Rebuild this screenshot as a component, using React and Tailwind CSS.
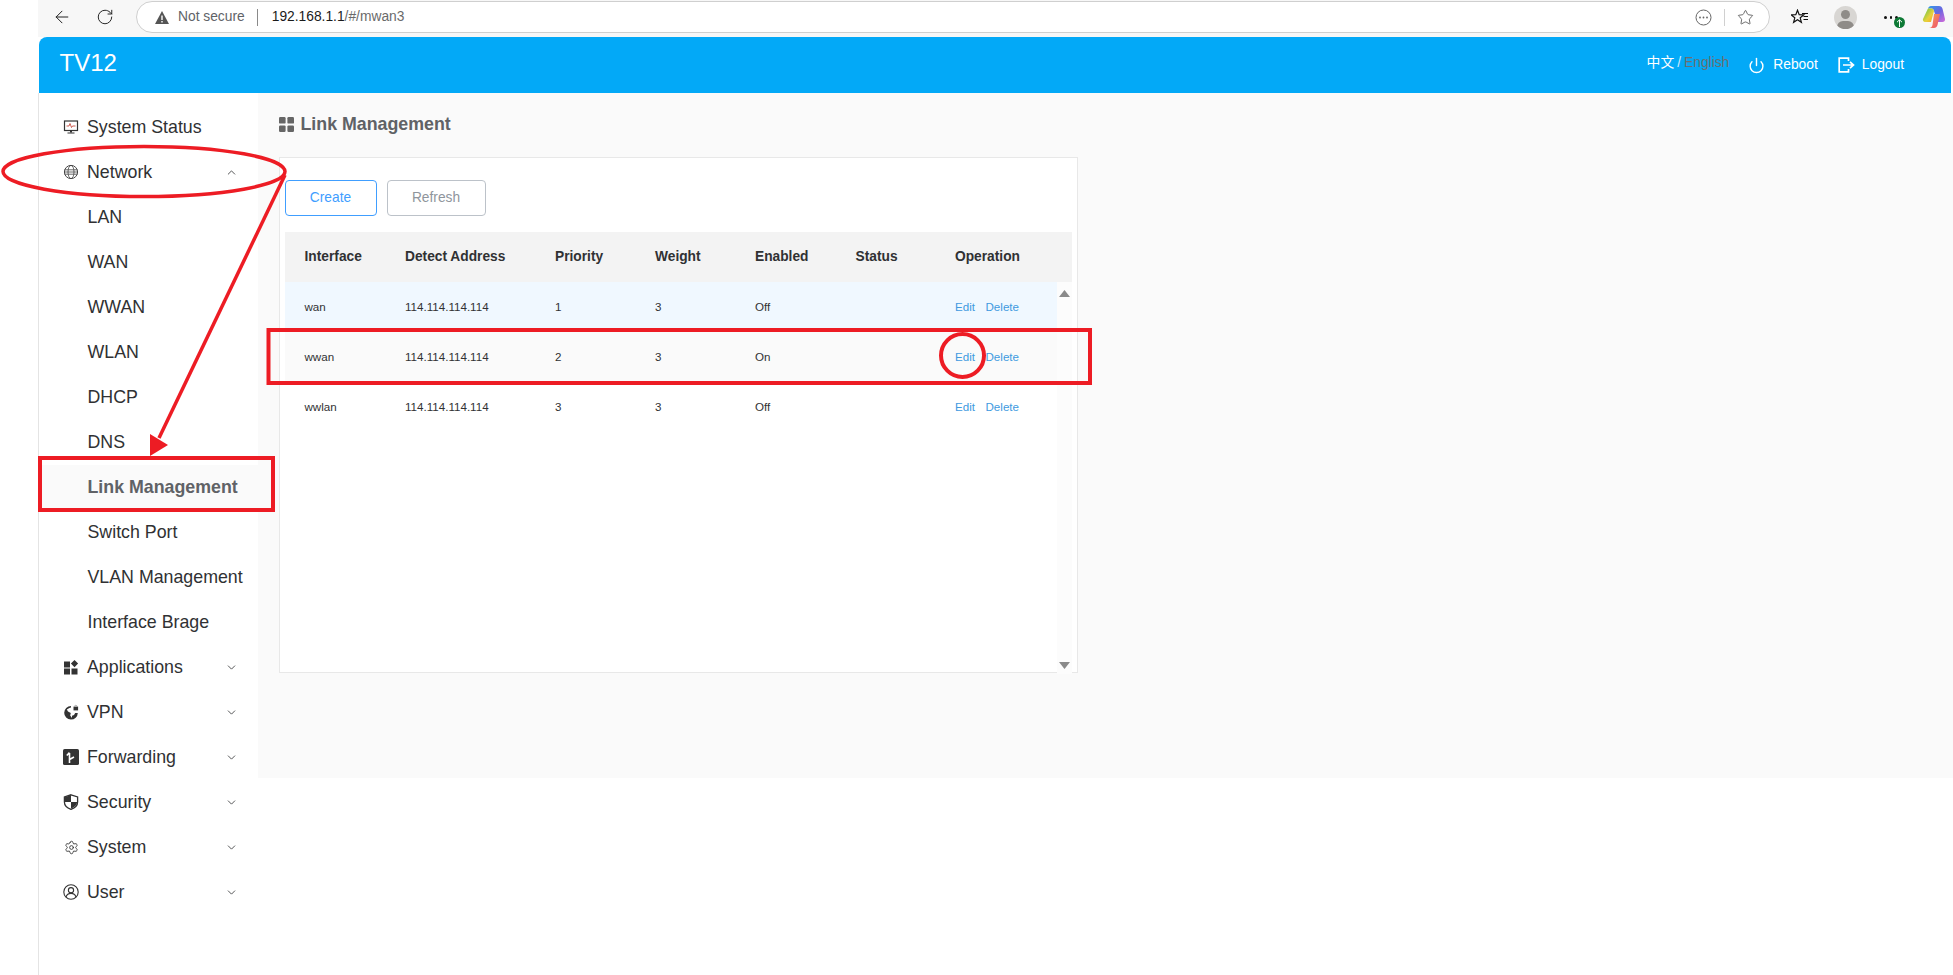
import React from "react";
import { ChevronUp, ChevronDown, ArrowLeft, RotateCw, Star, Power, Settings } from "lucide-react";

const P = ({ children, className = "" }) => (
  <svg viewBox="0 0 16 16" className={`w-[16px] h-[16px] shrink-0 ${className}`}>{children}</svg>
);

const icons = {
  status: (
    <P>
      <rect x="1.5" y="2" width="13" height="9.5" fill="none" stroke="#333" strokeWidth="1.2" />
      <path d="M3.5 7h2.5l1-2.5 1.5 4 1-1.5h3" fill="none" stroke="#c0392b" strokeWidth=".8" />
      <path d="M7 11.5h2v1.8H7zM4.5 13.5h7v1h-7z" fill="#333" />
    </P>
  ),
  network: (
    <P>
      <circle cx="8" cy="8" r="6.6" fill="none" stroke="#444" strokeWidth="1" />
      <ellipse cx="8" cy="8" rx="3" ry="6.6" fill="none" stroke="#444" strokeWidth=".8" />
      <path d="M1.6 5.8h12.8M1.4 8h13.2M1.6 10.2h12.8" stroke="#444" strokeWidth=".8" />
    </P>
  ),
  apps: (
    <P>
      <path d="M1 2.5h6v6H1zM1 9.5h6v6H1zM8.5 9.5h6v6h-6zM11.5 1l3.6 3.6-3.6 3.6-3.6-3.6z" fill="#333" />
    </P>
  ),
  vpn: (
    <P>
      <path d="M8 2a6.8 6.8 0 1 0 6.8 7h-2.6l-1.2 2-2 .8V14l-1.8-2.6.6-2.4-2.8-1.4-1.2-2L6.4 4l1.6-.4z" fill="#333" />
      <path d="M10.5 2.6h4.6v3.8h-4.6z" fill="#333" />
      <path d="M11.5 2.6a1.3 1.3 0 0 1 2.6 0" fill="none" stroke="#999" strokeWidth=".8" />
    </P>
  ),
  forward: (
    <P>
      <rect x="0" y="0" width="16" height="16" rx="1.6" fill="#333" />
      <path d="M6.5 14V4M3.8 6.5 6.5 3.6M6.5 10.5l4.5-2.5" fill="none" stroke="#fff" strokeWidth="1.6" />
    </P>
  ),
  security: (
    <P>
      <path d="M8 .8 14.6 3v5c0 3.6-2.8 6-6.6 7.4C4.200 14 1.400 11.600 1.400 8V3z" fill="none" stroke="#333" strokeWidth="1.300" />
      <path d="M8 1v7H1.800V3.200zM8 8h6.200c-.3 3.300-2.800 5.300-6.200 6.600z" fill="#333" />
    </P>
  ),
  system: <Settings size={15} strokeWidth={1.4} color="#333" className="shrink-0" />,
  user: (
    <P>
      <circle cx="8" cy="8" r="7.200" fill="none" stroke="#333" strokeWidth="1.100" />
      <circle cx="8" cy="6.200" r="2.600" fill="none" stroke="#333" strokeWidth="1.100" />
      <path d="M3 13c.8-2.500 2.800-3.600 5-3.600s4.200 1.100 5 3.600" fill="none" stroke="#333" strokeWidth="1.100" />
    </P>
  ),
};

function TopItem({ icon, label, open, chevron = true }) {
  return (
    <div className="h-[45px] flex items-center pl-[25px] pr-[20px] text-[#303133]">
      <span className="w-[14px] h-[16px] flex items-center justify-center">{icons[icon]}</span>
      <span className="ml-[9px] text-[17.8px] flex-1 whitespace-nowrap">{label}</span>
      {chevron && (open ? <ChevronUp size={13} strokeWidth={1.5} /> : <ChevronDown size={13} strokeWidth={1.5} />)}
    </div>
  );
}

function SubItem({ label, active }) {
  return (
    <div
      className={
        active
          ? "h-[45px] flex items-center pl-[46.500px] bg-[#fafafa] border-l-2 border-[#409eff] text-[#606266] font-bold text-[17.800px] whitespace-nowrap"
          : "h-[45px] flex items-center pl-[48.500px] text-[#303133] text-[17.800px] whitespace-nowrap"
      }
    >
      {label}
    </div>
  );
}

function Sidebar() {
  return (
    <aside className="w-[220px] shrink-0 bg-white pt-[11.500px] border-l border-[#e4e4e4]">
      <TopItem icon="status" label="System Status" chevron={false} />
      <TopItem icon="network" label="Network" open />
      {["LAN", "WAN", "WWAN", "WLAN", "DHCP", "DNS"].map((s) => (
        <SubItem key={s} label={s} />
      ))}
      <SubItem label="Link Management" active />
      {["Switch Port", "VLAN Management", "Interface Brage"].map((s) => (
        <SubItem key={s} label={s} />
      ))}
      <TopItem icon="apps" label="Applications" />
      <TopItem icon="vpn" label="VPN" />
      <TopItem icon="forward" label="Forwarding" />
      <TopItem icon="security" label="Security" />
      <TopItem icon="system" label="System" />
      <TopItem icon="user" label="User" />
    </aside>
  );
}

const rows = [
  { name: "wan", pr: "1", en: "Off", bg: "bg-[#f0f8ff]" },
  { name: "wwan", pr: "2", en: "On", bg: "bg-[#fafafa]" },
  { name: "wwlan", pr: "3", en: "Off", bg: "bg-white" },
];
const cols = "grid grid-cols-[100.500px_150px_100px_100px_100.500px_99.500px_1fr] items-center";

function Table() {
  return (
    <div className="mx-[5px] mt-[16px]">
      <div className={`${cols} h-[50px] bg-[#f3f3f3] text-[13.750px] font-bold text-[#303133]`}>
        {["Interface", "Detect Address", "Priority", "Weight", "Enabled", "Status", "Operation"].map((h) => (
          <div key={h} className="pl-[20px] whitespace-nowrap">{h}</div>
        ))}
      </div>
      <div className="flex">
        <div className="w-[772.500px] text-[11.600px] text-[#303133]">
          {rows.map((r) => (
            <div key={r.name} className={`${cols} h-[50px] ${r.bg}`}>
              <div className="pl-[20px]">{r.name}</div>
              <div className="pl-[20px]">114.114.114.114</div>
              <div className="pl-[20px]">{r.pr}</div>
              <div className="pl-[20px]">3</div>
              <div className="pl-[20px]">{r.en}</div>
              <div className="pl-[20px]"></div>
              <div className="pl-[20px] flex gap-[10.500px] text-[#409ae0]">
                <span>Edit</span>
                <span>Delete</span>
              </div>
            </div>
          ))}
        </div>
        <div className="w-[15px] h-[392px] bg-[#fcfcfc] flex flex-col items-center justify-between pt-[8px] pb-[5px]">
          <svg width="11" height="7" viewBox="0 0 11 7"><path d="M5.500 0 11 7H0z" fill="#8a8a8a" /></svg>
          <svg width="11" height="7" viewBox="0 0 11 7"><path d="M0 0h11L5.500 7z" fill="#8a8a8a" /></svg>
        </div>
      </div>
    </div>
  );
}

function Content() {
  return (
    <main className="flex-1 h-[685px] bg-[#fafafa] pl-[20.500px]">
      <div className="h-[64px] flex items-center gap-[7px] text-[#606266]">
        <svg width="15" height="15" viewBox="0 0 15 15" className="-mt-[1px]">
          <rect x="0" y="0" width="6.600" height="6.600" rx="1.200" fill="#666" />
          <rect x="8.400" y="0" width="6.600" height="6.600" rx="1.200" fill="#666" />
          <rect x="0" y="8.400" width="6.600" height="6.600" rx="1.200" fill="#666" />
          <rect x="8.400" y="8.400" width="6.600" height="6.600" rx="1.200" fill="#666" />
        </svg>
        <span className="text-[17.800px] font-bold -mt-[2px]">Link Management</span>
      </div>
      <section className="w-[799px] h-[516px] bg-white border border-[#e8e8e8] pt-[22px]">
        <div className="flex gap-[10px] mx-[5px]">
          <button className="w-[92px] h-[36px] rounded-[4px] border border-[#409eff] text-[#409eff] text-[13.750px]">Create</button>
          <button className="w-[99px] h-[36px] rounded-[4px] border border-[#bcc2c9] text-[#8f959c] text-[13.750px]">Refresh</button>
        </div>
        <Table />
      </section>
    </main>
  );
}

function Copilot() {
  return (
    <svg width="24" height="24" viewBox="0 0 24 24">
      <defs>
        <linearGradient id="cpa" x1="0" y1="0" x2="1" y2="1">
          <stop offset="0" stopColor="#2f9be8" />
          <stop offset=".5" stopColor="#6a66e0" />
          <stop offset="1" stopColor="#d36ad8" />
        </linearGradient>
        <linearGradient id="cpb" x1="0" y1="0" x2="1" y2="1">
          <stop offset="0" stopColor="#57c24a" />
          <stop offset=".6" stopColor="#e8d23c" />
          <stop offset="1" stopColor="#f5a623" />
        </linearGradient>
        <linearGradient id="cpc" x1="0" y1="0" x2="1" y2="1">
          <stop offset="0" stopColor="#f5a05a" />
          <stop offset="1" stopColor="#ee4f6b" />
        </linearGradient>
      </defs>
      <path d="M9 1h8c2 0 3 1 3.600 3l2.400 10c.3 2-1 3-2.500 3h-5L12 6c-.6-2-1.500-2.500-3-2.500H6C6.500 2 7.500 1 9 1z" fill="url(#cpa)" />
      <path d="M6 3.500h3c1.500 0 2.400.5 3 2.500l-3 11H3C1.500 17 .5 15.500 1 14z" fill="url(#cpb)" />
      <path d="M12 9h6l-2.500 11c-.5 2-2 3-3.500 3H7c2 0 3-1 3.500-3z" fill="url(#cpc)" />
    </svg>
  );
}

function BrowserBar() {
  return (
    <div className="h-[37px] bg-[#f7f7f7] flex items-start relative">
      <div className="w-[98px] h-[34px] flex items-center pl-[14px] gap-[24px] text-[#222]">
        <ArrowLeft size={20} strokeWidth={1.200} />
        <RotateCw size={18} strokeWidth={1.300} />
      </div>
      <div className="mt-[1px] w-[1634px] h-[32px] bg-white border border-[#cfcfcf] rounded-full flex items-center pl-[18px] pr-[14px] text-[14px]">
        <svg width="14" height="13" viewBox="0 0 14 13">
          <path d="M7 0 14 13H0z" fill="#555" />
          <path d="M6.300 4.500h1.400v4.500H6.300zM6.300 10h1.400v1.500H6.300z" fill="#fff" />
        </svg>
        <span className="ml-[9px] text-[#5f6368] text-[13.800px]">Not secure</span>
        <span className="ml-[12px] w-px h-[17px] bg-[#8a8a8a]"></span>
        <span className="ml-[14px] text-[#1a1a1a] text-[13.800px]">192.168.1.1<span className="text-[#6a6a6a]">/#/mwan3</span></span>
        <div className="flex-1"></div>
        <svg width="17" height="17" viewBox="0 0 17 17">
          <circle cx="8.500" cy="8.500" r="7.500" fill="none" stroke="#666" strokeWidth="1" />
          <circle cx="5" cy="8.500" r=".9" fill="#666" /><circle cx="8.500" cy="8.500" r=".9" fill="#666" /><circle cx="12" cy="8.500" r=".9" fill="#666" />
        </svg>
        <span className="ml-[12px] w-px h-[17px] bg-[#d0d0d0]"></span>
        <Star size={17} strokeWidth={1.100} color="#444" className="ml-[12px] mr-[1px]" />
      </div>
      <div className="flex-1 h-[34px] relative">
        <svg width="18" height="17" viewBox="0 0 18 17" className="absolute left-[21px] top-[9px]">
          <path d="M6.500 1.200 8.200 5.700l4.600.2-3.600 2.900 1.200 4.500-3.900-2.500-3.900 2.500 1.200-4.500L.2 5.900l4.600-.2z" fill="none" stroke="#111" strokeWidth="1.200" />
          <path d="M11 4.500h6M12.500 7.500h4.500M12.500 10.500h4.500" stroke="#111" strokeWidth="1" />
        </svg>
        <div className="absolute left-[64px] top-[6px] w-[23px] h-[23px] rounded-full bg-[#d8d6d3] overflow-hidden">
          <div className="absolute left-[7px] top-[4px] w-[9px] h-[9px] rounded-full bg-[#8f8c88]"></div>
          <div className="absolute left-[3px] top-[15px] w-[17px] h-[12px] rounded-full bg-[#8f8c88]"></div>
        </div>
        <div className="absolute left-[114px] top-[16px] flex gap-[3px]">
          <span className="w-[2.500px] h-[2.500px] rounded-full bg-[#111]"></span>
          <span className="w-[2.500px] h-[2.500px] rounded-full bg-[#111]"></span>
          <span className="w-[2.500px] h-[2.500px] rounded-full bg-[#111]"></span>
        </div>
        <div className="absolute left-[124px] top-[17px] w-[11px] h-[11px] rounded-full bg-[#0e7a36] flex items-center justify-center">
          <svg width="7" height="8" viewBox="0 0 7 8"><path d="M3.500 8V1M1 3.200 3.500.8 6 3.200" fill="none" stroke="#fff" strokeWidth="1" /></svg>
        </div>
        <div className="absolute left-[152px] top-[5px]"><Copilot /></div>
      </div>
    </div>
  );
}

function Header() {
  return (
    <header className="h-[56px] bg-[#03a9f7] rounded-t-[8px] ml-[1px] mr-[2px] flex items-center pl-[20.500px] text-white">
      <span className="text-[24px] leading-none -mt-[4px]">TV12</span>
      <div className="flex-1"></div>
      <div className="flex items-center text-[13.800px] -mt-[3px]">
        <span className="font-['Liberation_Sans','Noto_Sans_CJK_SC',sans-serif]">中文</span>
        <span className="mx-[3px] text-[#cfeafc]">/</span>
        <span className="text-[#6a6f70]">English</span>
      </div>
      <Power size={17} strokeWidth={2} className="ml-[19px]" />
      <span className="ml-[8px] text-[13.800px]">Reboot</span>
      <svg width="17" height="16" viewBox="0 0 17 16" className="ml-[20px]">
        <path d="M10.500 4V1.200H1.200v13.600h9.300V12" fill="none" stroke="#fff" strokeWidth="1.700" />
        <path d="M5 8h10M12 4.800 15.500 8 12 11.200" fill="none" stroke="#fff" strokeWidth="1.700" />
      </svg>
      <span className="ml-[7px] mr-[47px] text-[13.800px]">Logout</span>
    </header>
  );
}

function Annotations() {
  return (
    <svg width="1953" height="975" viewBox="0 0 1953 975" className="absolute left-0 top-0 pointer-events-none">
      <g fill="none" stroke="#ed1c24">
        <ellipse cx="144" cy="171.500" rx="141" ry="25" strokeWidth="3.500" />
        <path d="M285 175 159 438" strokeWidth="3.500" />
        <rect x="40" y="458" width="233" height="52" strokeWidth="4" />
        <rect x="268.500" y="330" width="821.500" height="53" strokeWidth="4" />
        <circle cx="962.500" cy="355.500" r="21.500" strokeWidth="4" />
      </g>
      <path d="M150 456 150 434 168 445z" fill="#ed1c24" />
    </svg>
  );
}

export default function App() {
  return (
    <div className="relative w-[1953px] h-[975px] overflow-hidden bg-white font-['Liberation_Sans','Noto_Sans_CJK_SC',sans-serif] pl-[38px]">
      <BrowserBar />
      <Header />
      <div className="flex items-start h-[882px]">
        <div className="self-stretch flex"><Sidebar /></div>
        <Content />
      </div>
      <Annotations />
    </div>
  );
}
